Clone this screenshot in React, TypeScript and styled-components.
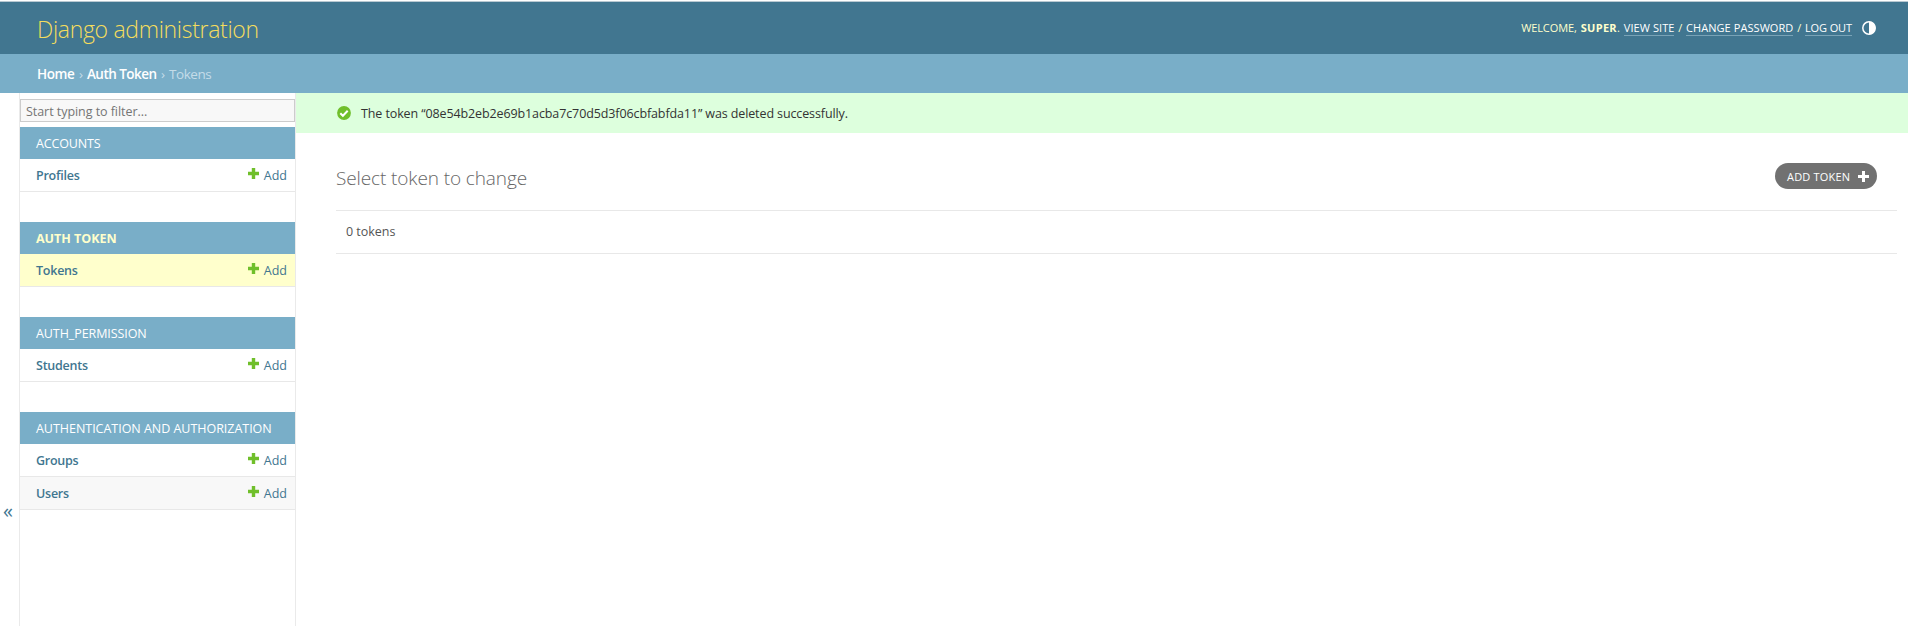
import React from "react";
import styled, { createGlobalStyle } from "styled-components";

const GlobalStyle = createGlobalStyle`
  * { box-sizing: border-box; }
  body {
    margin: 0;
    background: #fff;
    color: #333;
    font-family: "Segoe UI", "Open Sans", "Noto Sans", sans-serif;
    overflow: hidden;
  }
  a { color: inherit; text-decoration: none; }
`;

const Page = styled.div`
  display: flex;
  flex-direction: column;
  height: 626px;
  border-top: 1px solid #fff;
`;

const Header = styled.header`
  display: flex;
  justify-content: space-between;
  align-items: center;
  flex: none;
  height: 53px;
  padding: 0 32px 0 37px;
  border-top: 1px solid #b9c9d2;
  background: #417690;
  color: #ffc;
`;

const Brand = styled.h1`
  margin: 2px 0 0;
  font-size: 23px;
  font-weight: 300;
  line-height: 30px;
  letter-spacing: -0.31px;
  color: #f5dd5d;
`;

const UserTools = styled.div`
  display: flex;
  align-items: center;
  font-size: 11px;
  line-height: 14px;
  white-space: pre;
`;

const Welcome = styled.span`
  letter-spacing: -0.1px;
`;

const UserName = styled.strong`
  margin-left: 4px;
  font-weight: 700;
  letter-spacing: 0.3px;
`;

const Stop = styled.span`
  margin-right: 4px;
`;

const ToolLink = styled.a<{ $track?: number }>`
  border-bottom: 1px solid #79a3b7;
  color: #fff;
  letter-spacing: ${(p) => p.$track ?? 0.07}px;
`;

const Slash = styled.span`
  width: 11.5px;
  text-align: center;
`;

const ThemeButton = styled.button`
  display: flex;
  margin: 0 0 1px 10px;
  padding: 0;
  border: 0;
  background: none;
  color: #fff;
`;

const Breadcrumbs = styled.nav`
  display: flex;
  align-items: center;
  flex: none;
  height: 39px;
  padding: 1px 37px 0;
  background: #79aec8;
  color: #c4dce8;
  font-size: 13.5px;
  line-height: 18px;
  letter-spacing: -0.45px;
`;

const Crumb = styled.a<{ $track: number }>`
  color: #fff;
  font-weight: 600;
  letter-spacing: ${(p) => p.$track}px;
`;

const Chevron = styled.span`
  width: 12.5px;
  text-align: center;
`;

const Main = styled.div`
  display: flex;
  flex: 1;
  min-height: 0;
`;

const SidebarToggle = styled.button`
  display: flex;
  flex: none;
  align-items: center;
  justify-content: center;
  width: 20px;
  padding: 303px 3px 0 0;
  align-self: flex-start;
  height: 533px;
  border: 0;
  border-right: 1px solid #eaeaea;
  background: #fff;
  color: #417690;
  font: 20px/24px "Open Sans", sans-serif;
`;

const Sidebar = styled.nav`
  flex: none;
  width: 276px;
  padding-top: 6px;
  border-right: 1px solid #eaeaea;
`;

const Filter = styled.input`
  display: block;
  width: 100%;
  height: 23px;
  margin: 0 0 5px;
  padding: 1px 5px 0;
  border: 1px solid #ccc;
  background: #f8f8f8;
  font: 12.5px "Open Sans", sans-serif;
  letter-spacing: -0.05px;

  &::placeholder { color: #757575; opacity: 1; }
`;

const Module = styled.section`
  margin-bottom: 30px;
`;

const Caption = styled.h2<{ $current?: boolean; $track?: number }>`
  margin: 0;
  height: 32px;
  padding-left: 16px;
  background: #79aec8;
  color: ${(p) => (p.$current ? "#ffc" : "#fff")};
  font-size: 12.5px;
  font-weight: ${(p) => (p.$current ? 700 : 400)};
  line-height: 33px;
  letter-spacing: ${(p) => p.$track ?? 0}px;
  text-transform: uppercase;
`;

const Row = styled.div<{ $tone: string }>`
  display: flex;
  align-items: center;
  justify-content: space-between;
  height: 33px;
  padding: 1px 8px 0 16px;
  border-bottom: 1px solid #e8e8e8;
  background: ${(p) => p.$tone};
  color: #417690;
  font-size: 12.5px;
`;

const ModelLink = styled.a`
  font-weight: 600;
  letter-spacing: -0.24px;
`;

const AddLink = styled.a`
  display: flex;
  align-items: center;
  gap: 5px;

  svg { margin-bottom: 4px; }
`;

const Content = styled.main`
  flex: 1;
  min-width: 0;
`;

const Message = styled.div`
  display: flex;
  align-items: center;
  height: 40px;
  padding-left: 41px;
  background: #dfd;
  font-size: 12.5px;
  letter-spacing: -0.11px;
  white-space: pre;

  svg { margin-right: 10px; }
`;

const Heading = styled.div`
  display: flex;
  align-items: flex-start;
  justify-content: space-between;
  height: 77px;
  padding: 30px 31px 0 40px;
`;

const Title = styled.h2`
  margin: 1px 0 0;
  color: #666;
  font-size: 19px;
  font-weight: 300;
  line-height: 28px;
  letter-spacing: -0.11px;
`;

const AddButton = styled.a`
  display: flex;
  align-items: center;
  justify-content: space-between;
  width: 102px;
  height: 26px;
  padding: 0 8px 0 12px;
  border-radius: 13px;
  background: #717171;
  color: #fff;
  font-size: 11px;
  letter-spacing: 0.18px;
`;

const Paginator = styled.p`
  margin: 0 11px 0 40px;
  height: 44px;
  padding: 0 10px;
  border-top: 1px solid #e8e8e8;
  border-bottom: 1px solid #e8e8e8;
  color: #555;
  font-size: 12.5px;
  line-height: 42px;
  letter-spacing: -0.03px;
`;

const ContrastIcon = () => (
  <svg width="14" height="14" viewBox="0 0 14 14">
    <circle cx="7" cy="7" r="6.2" fill="none" stroke="currentColor" strokeWidth="1.5" />
    <path d="M7 0.5a6.5 6.5 0 0 1 0 13z" fill="currentColor" />
  </svg>
);

const PlusIcon = ({ size, color, bar }: { size: number; color: string; bar: number }) => (
  <svg width={size} height={size} viewBox={`0 0 ${size} ${size}`}>
    <path
      d={`M${size / 2} 0V${size}M0 ${size / 2}H${size}`}
      stroke={color}
      strokeWidth={bar}
    />
  </svg>
);

const CheckIcon = () => (
  <svg width="14" height="14" viewBox="0 0 14 14">
    <circle cx="7" cy="7" r="6.9" fill="#70bf2b" />
    <path d="M3.3 7.2l2.6 2.6 4.8-5" fill="none" stroke="#fff" strokeWidth="2" />
  </svg>
);

type AdminApp = { name: string; models: string[]; current?: boolean; track?: number };

const apps: AdminApp[] = [
  { name: "Accounts", models: ["Profiles"], track: -0.15 },
  { name: "Auth Token", models: ["Tokens"], current: true },
  { name: "Auth_permission", models: ["Students"], track: -0.08 },
  { name: "Authentication and Authorization", models: ["Groups", "Users"], track: -0.03 },
];

const rowTone = (current: boolean | undefined, index: number) =>
  current ? "#ffc" : index % 2 ? "#f8f8f8" : "#fff";

export default function AdminPage() {
  return (
    <Page>
      <GlobalStyle />
      <Header>
        <Brand>Django administration</Brand>
        <UserTools>
          <Welcome>WELCOME,</Welcome>
          <UserName>SUPER</UserName>
          <Stop>.</Stop>
          <ToolLink href="#">VIEW SITE</ToolLink>
          <Slash>/</Slash>
          <ToolLink href="#">CHANGE PASSWORD</ToolLink>
          <Slash>/</Slash>
          <ToolLink href="#" $track={-0.1}>LOG OUT</ToolLink>
          <ThemeButton aria-label="Toggle theme"><ContrastIcon /></ThemeButton>
        </UserTools>
      </Header>
      <Breadcrumbs>
        <Crumb href="#" $track={-0.4}>Home</Crumb>
        <Chevron>›</Chevron>
        <Crumb href="#" $track={-0.53}>Auth Token</Crumb>
        <Chevron>›</Chevron>
        <span>Tokens</span>
      </Breadcrumbs>
      <Main>
        <SidebarToggle>«</SidebarToggle>
        <Sidebar>
          <Filter placeholder="Start typing to filter..." />
          {apps.map((app) => (
            <Module key={app.name}>
              <Caption $current={app.current} $track={app.track}>{app.name}</Caption>
              {app.models.map((model, i) => (
                <Row key={model} $tone={rowTone(app.current, i)}>
                  <ModelLink href="#">{model}</ModelLink>
                  <AddLink href="#">
                    <PlusIcon size={11} bar={3.4} color="#70bf2b" />
                    Add
                  </AddLink>
                </Row>
              ))}
            </Module>
          ))}
        </Sidebar>
        <Content>
          <Message>
            <CheckIcon />
            The token “08e54b2eb2e69b1acba7c70d5d3f06cbfabfda11” was deleted successfully.
          </Message>
          <Heading>
            <Title>Select token to change</Title>
            <AddButton href="#">
              ADD TOKEN
              <PlusIcon size={11} bar={3} color="#fff" />
            </AddButton>
          </Heading>
          <Paginator>0 tokens</Paginator>
        </Content>
      </Main>
    </Page>
  );
}
